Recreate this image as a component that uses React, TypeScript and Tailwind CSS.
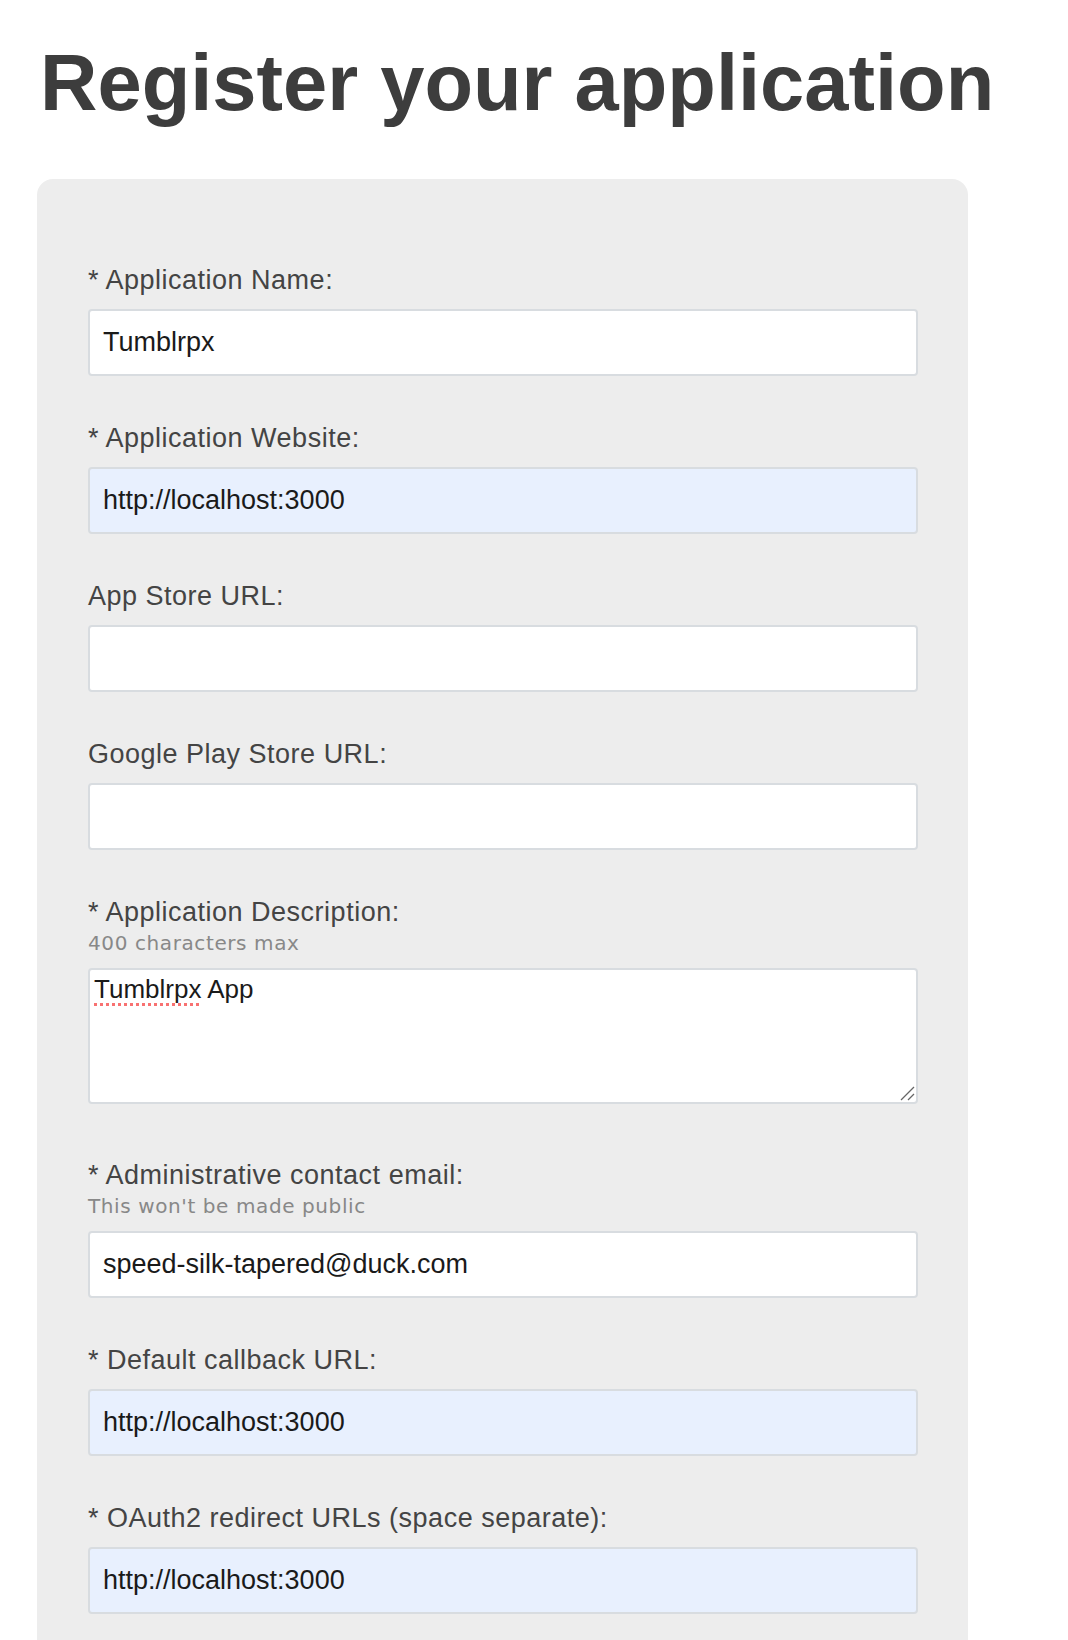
const sans = { fontFamily: '"Liberation Sans", Arial, sans-serif' };
const hintFont = { fontFamily: '"DejaVu Sans", Verdana, sans-serif' };

const Field = ({ label, hint, value, filled }: { label: string; hint?: string; value: string; filled?: boolean }) => (
  <div className="flex flex-col">
    <label className="h-[32px] text-[27px] leading-[32px] tracking-[0.5px] text-[#444]">{label}</label>
    {hint && (
      <span className="mt-[3px] h-[24px] text-[20px] leading-[24px] tracking-[0.6px] text-[#888]" style={hintFont}>
        {hint}
      </span>
    )}
    <div
      className={`mt-[13px] flex h-[67px] items-center rounded-[4px] border-2 border-[#d8dce0] px-[13px] text-[27px] text-[#1a1a1a] ${
        filled ? 'bg-[#e8f0fe]' : 'bg-white'
      }`}
    >
      {value}
    </div>
  </div>
);

const Register = () => {
  return (
    <div className="min-h-screen bg-white pt-[43px]" style={sans}>
      <h1 className="ml-[40px] text-[79.5px] font-bold leading-[79px] text-[#3d3d3d]">Register your application</h1>

      <div className="mt-[57px] ml-[37px] w-[931px] rounded-[16px] bg-[#ededed] pt-[85px] pb-[90px] pl-[51px] pr-[50px]">
        <div className="flex flex-col gap-[46px]">
          <Field label="* Application Name:" value="Tumblrpx" />
          <Field label="* Application Website:" value="http://localhost:3000" filled />
          <Field label="App Store URL:" value="" />
          <Field label="Google Play Store URL:" value="" />

          <div className="mb-[9px] flex flex-col">
            <label className="h-[32px] text-[27px] leading-[32px] tracking-[0.5px] text-[#444]">
              * Application Description:
            </label>
            <span className="mt-[3px] h-[24px] text-[20px] leading-[24px] tracking-[0.6px] text-[#888]" style={hintFont}>
              400 characters max
            </span>
            <div className="relative mt-[13px] h-[136px] rounded-[4px] border-2 border-[#d8dce0] bg-white pt-[4px] pl-[4px] text-[26px] leading-[30px] text-[#1a1a1a]">
              <span className="underline decoration-[#f87171] decoration-dotted decoration-[3px] underline-offset-[5px] [text-decoration-skip-ink:none]">
                Tumblrpx
              </span>{' '}
              App
              <svg className="absolute right-[1px] bottom-[1px]" width="15" height="15" viewBox="0 0 15 15">
                <line x1="1" y1="14" x2="14" y2="1" stroke="#666" strokeWidth="1.3" />
                <line x1="8" y1="14" x2="14" y2="8" stroke="#666" strokeWidth="1.3" />
              </svg>
            </div>
          </div>

          <Field
            label="* Administrative contact email:"
            hint="This won't be made public"
            value="speed-silk-tapered@duck.com"
          />
          <Field label="* Default callback URL:" value="http://localhost:3000" filled />
          <Field label="* OAuth2 redirect URLs (space separate):" value="http://localhost:3000" filled />
        </div>
      </div>
    </div>
  );
};

export default function App() {
  return <Register />;
}
